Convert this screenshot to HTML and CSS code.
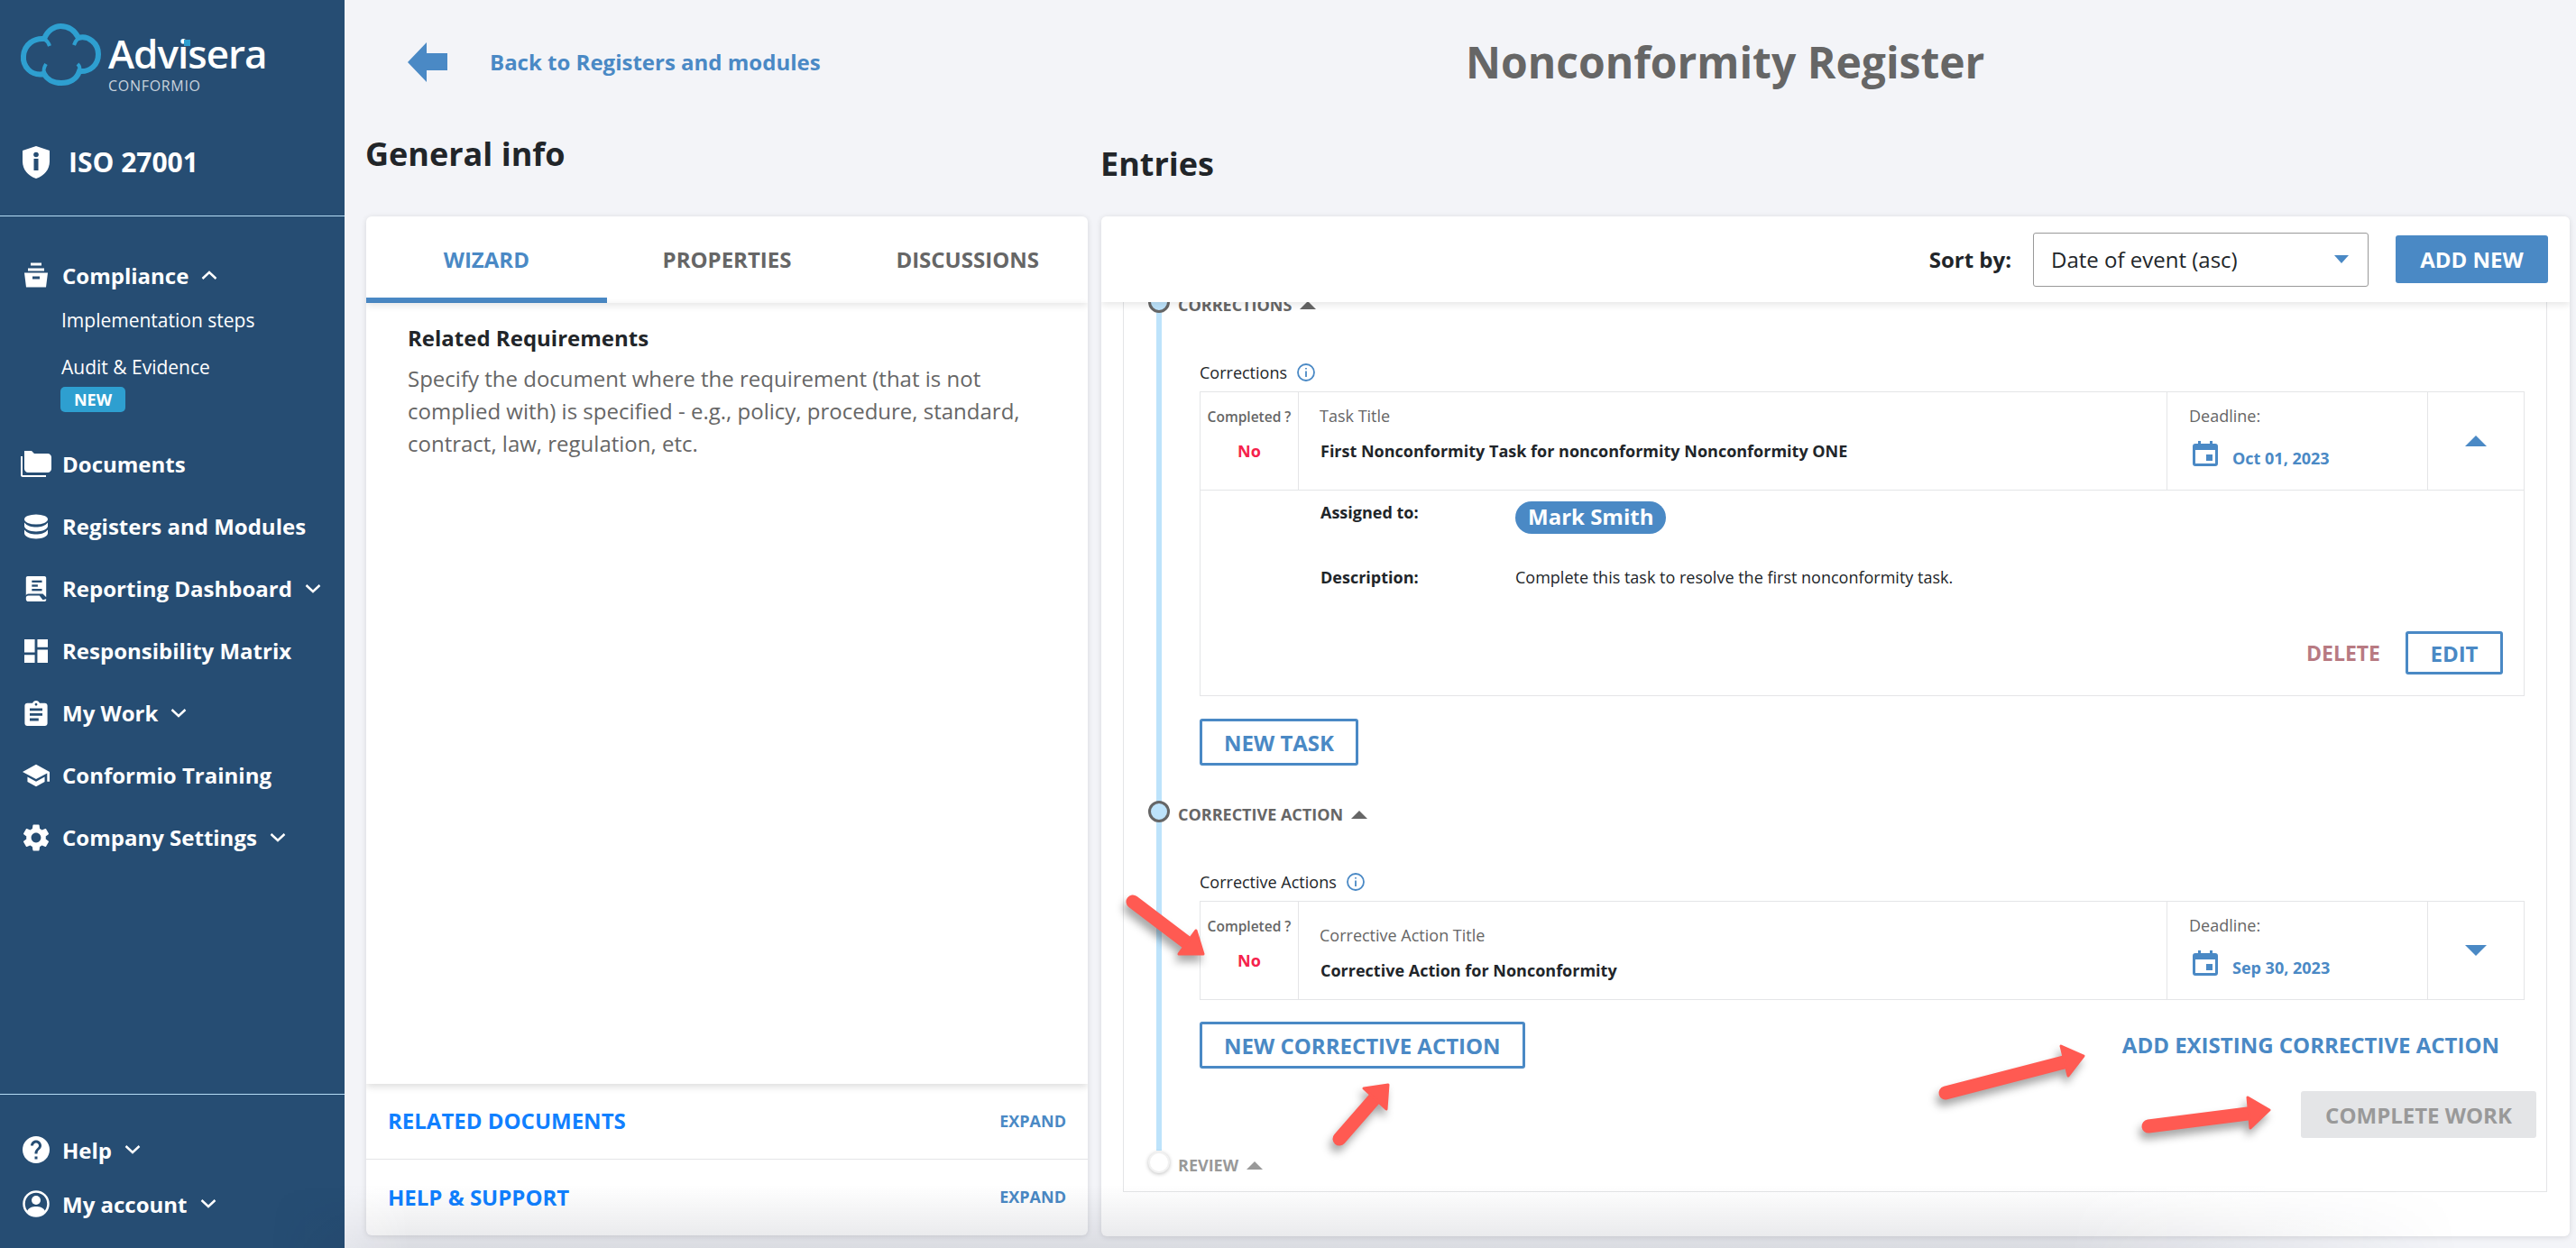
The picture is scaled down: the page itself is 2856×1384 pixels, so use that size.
FILE: index.html
```html
<!DOCTYPE html>
<html lang="en">

<head>
    <meta charset="UTF-8">
    <meta name="viewport" content="width=device-width, initial-scale=1.0">
    <title>Nonconformity Register</title>
    <link rel="stylesheet" href="styles.css">
</head>

<body>

    <!-- Sidebar -->
    <aside class="sidebar">
        <div class="brand">
            <div class="logo">
                <svg class="logo-cloud" viewBox="0 0 90 69">
                    <path d="M27 56C12 59 3 47 4 36C5 23 16 16 27 17C31 7 39 3 45 3C54 3 61 8 65 16C76 13 87 22 87 34C87 46 78 54 66 53C63 62 55 66 46 66C37 66 30 62 27 56Z"/>
                    <path class="logo-curl" d="M27 17C30 19 32 22 33 25M65 16C63 18 61 21 60 24M27 56C26 52 27 48 29 45M66 53C67 50 66 47 64 45"/>
                </svg>
                <div class="logo-text">
                    <span class="logo-name">Advisera<i class="logo-dot"></i></span>
                    <span class="logo-sub">CONFORMIO</span>
                </div>
            </div>
            <div class="iso">
                <svg class="iso-icon" viewBox="0 0 30 36"><path d="M15 0L30 5V17C30 26 24 33 15 36C6 33 0 26 0 17V5Z"/><rect class="cut" x="12.5" y="14" width="5" height="13"/><circle class="cut" cx="15" cy="9.5" r="2.8"/></svg>
                <span>ISO 27001</span>
            </div>
        </div>

        <nav class="nav">
            <div class="nav-row nav-row-open">
                <span class="nav-icon"><svg viewBox="0 0 26 27"><rect x="7" y="0" width="12" height="3"/><rect x="4" y="6" width="18" height="3"/><path d="M0 11H26L24 27H2ZM9 15V18H17V15Z" fill-rule="evenodd"/></svg></span>
                <span>Compliance</span>
                <svg class="chev" viewBox="0 0 18 10"><polyline points="1.5,9 9,2 16.5,9"/></svg>
            </div>
            <a class="sub-link">Implementation steps</a>
            <a class="sub-link sub-link-audit">Audit &amp; Evidence</a>
            <span class="badge-new">NEW</span>

            <div class="nav-row">
                <span class="nav-icon nav-icon-folder"><svg viewBox="0 0 34 29"><path d="M4 0H12L15 3H30C32 3 34 5 34 7V20C34 22 32 24 30 24H8C6 24 4 22 4 20Z"/><path d="M0 6H2V26C2 27 2 27 3 27H28V29H2C1 29 0 28 0 27Z"/></svg></span>
                <span>Documents</span>
            </div>
            <div class="nav-row">
                <span class="nav-icon"><svg viewBox="0 0 26 27"><ellipse cx="13" cy="5.5" rx="13" ry="5.5"/><path d="M0 9C3 13 8 14 13 14C18 14 23 13 26 9V13C26 16 20 19 13 19C6 19 0 16 0 13Z"/><path d="M0 17C3 21 8 22 13 22C18 22 23 21 26 17V21C26 24 20 27 13 27C6 27 0 24 0 21Z"/></svg></span>
                <span>Registers and Modules</span>
            </div>
            <div class="nav-row">
                <span class="nav-icon"><svg viewBox="0 0 24 30"><path d="M2 0H22C23 0 24 1 24 2V25L20 21H3C1 21 0 22 0 24V2C0 1 1 0 2 0Z"/><path d="M3 23H16L20 28L24 27V28C24 29 23 30 22 30H3C1 30 0 29 0 27V26C0 24 1 23 3 23Z"/><rect class="cut" x="7" y="5" width="12" height="2.5"/><rect class="cut" x="7" y="10" width="7" height="2.5"/><rect class="cut" x="7" y="15" width="12" height="2.5"/></svg></span>
                <span>Reporting Dashboard</span>
                <svg class="chev chev-down" viewBox="0 0 18 10"><polyline points="1.5,1 9,8 16.5,1"/></svg>
            </div>
            <div class="nav-row">
                <span class="nav-icon"><svg viewBox="3 3 18 18"><path d="M3 13h8V3H3v10zm0 8h8v-6H3v6zm10 0h8V11h-8v10zm0-18v6h8V3h-8z"/></svg></span>
                <span>Responsibility Matrix</span>
            </div>
            <div class="nav-row">
                <span class="nav-icon"><svg viewBox="3 1 18 20"><path d="M19 3h-4.18C14.4 1.84 13.3 1 12 1c-1.3 0-2.4.84-2.82 2H5c-1.1 0-2 .9-2 2v14c0 1.1.9 2 2 2h14c1.1 0 2-.9 2-2V5c0-1.1-.9-2-2-2zm-7 0c.55 0 1 .45 1 1s-.45 1-1 1-1-.45-1-1 .45-1 1-1zm2 14H7v-2h7v2zm3-4H7v-2h10v2zm0-4H7V7h10v2z"/></svg></span>
                <span>My Work</span>
                <svg class="chev chev-down" viewBox="0 0 18 10"><polyline points="1.5,1 9,8 16.5,1"/></svg>
            </div>
            <div class="nav-row">
                <span class="nav-icon nav-icon-wide"><svg viewBox="1 3 22 18"><path d="M5 13.18v4L12 21l7-3.82v-4L12 17l-7-3.82zM12 3L1 9l11 6 9-4.91V17h2V9L12 3z"/></svg></span>
                <span>Conformio Training</span>
            </div>
            <div class="nav-row">
                <span class="nav-icon nav-icon-wide"><svg viewBox="2.5 2 19 20"><path d="M19.14 12.94c.04-.3.06-.61.06-.94 0-.32-.02-.64-.07-.94l2.03-1.58c.18-.14.23-.41.12-.61l-1.92-3.32c-.12-.22-.37-.29-.59-.22l-2.39.96c-.5-.38-1.03-.7-1.62-.94l-.36-2.54c-.04-.24-.24-.41-.48-.41h-3.84c-.24 0-.43.17-.47.41l-.36 2.54c-.59.24-1.13.57-1.62.94l-2.39-.96c-.22-.08-.47 0-.59.22L2.74 8.87c-.12.21-.08.47.12.61l2.03 1.58c-.05.3-.09.63-.09.94s.02.64.07.94l-2.03 1.58c-.18.14-.23.41-.12.61l1.92 3.32c.12.22.37.29.59.22l2.39-.96c.5.38 1.03.7 1.62.94l.36 2.54c.05.24.24.41.48.41h3.84c.24 0 .44-.17.47-.41l.36-2.54c.59-.24 1.13-.56 1.62-.94l2.39.96c.22.08.47 0 .59-.22l1.92-3.32c.12-.22.07-.47-.12-.61l-2.01-1.58zM12 15.6c-1.98 0-3.6-1.62-3.6-3.6s1.62-3.6 3.6-3.6 3.6 1.62 3.6 3.6-1.62 3.6-3.6 3.6z"/></svg></span>
                <span>Company Settings</span>
                <svg class="chev chev-down" viewBox="0 0 18 10"><polyline points="1.5,1 9,8 16.5,1"/></svg>
            </div>
        </nav>

        <div class="sidebar-foot">
            <div class="nav-row nav-row-foot">
                <span class="nav-icon nav-icon-wide"><svg viewBox="2 2 20 20"><path d="M12 2C6.48 2 2 6.48 2 12s4.48 10 10 10 10-4.48 10-10S17.52 2 12 2zm1 17h-2v-2h2v2zm2.07-7.75l-.9.92C13.45 12.9 13 13.5 13 15h-2v-.5c0-1.1.45-2.1 1.17-2.83l1.24-1.26c.37-.36.59-.86.59-1.41 0-1.1-.9-2-2-2s-2 .9-2 2H8c0-2.21 1.79-4 4-4s4 1.79 4 4c0 .88-.36 1.68-.93 2.25z"/></svg></span>
                <span>Help</span>
                <svg class="chev chev-down" viewBox="0 0 18 10"><polyline points="1.5,1 9,8 16.5,1"/></svg>
            </div>
            <div class="nav-row nav-row-foot">
                <span class="nav-icon nav-icon-wide"><svg viewBox="0 0 30 30"><circle class="ring" cx="15" cy="15" r="13.5"/><circle cx="15" cy="11" r="5"/><path d="M5 23C7 19 11 18 15 18C19 18 23 19 25 23C22 27 19 28 15 28C11 28 8 27 5 23Z"/></svg></span>
                <span>My account</span>
                <svg class="chev chev-down" viewBox="0 0 18 10"><polyline points="1.5,1 9,8 16.5,1"/></svg>
            </div>
        </div>
    </aside>

    <!-- Main area -->
    <main class="main">
        <header class="topbar">
            <a class="back">
                <svg class="back-arrow" viewBox="0 0 44 44"><path d="M0 22L21 0V12H44V31H21V44Z"/></svg>
                <span>Back to Registers and modules</span>
            </a>
            <h1 class="page-title">Nonconformity Register</h1>
        </header>

        <div class="columns">

            <!-- General info -->
            <section class="col col-left">
                <h2 class="col-title">General info</h2>
                <div class="panel panel-left">
                    <div class="tabs">
                        <div class="tab tab-active">WIZARD</div>
                        <div class="tab">PROPERTIES</div>
                        <div class="tab">DISCUSSIONS</div>
                    </div>
                    <div class="wizard-body">
                        <h3>Related Requirements</h3>
                        <p>Specify the document where the requirement (that is not complied with) is specified - e.g., policy, procedure, standard, contract, law, regulation, etc.</p>
                    </div>
                    <div class="accordion">
                        <span>RELATED DOCUMENTS</span>
                        <span class="expand">EXPAND</span>
                    </div>
                    <div class="accordion">
                        <span>HELP &amp; SUPPORT</span>
                        <span class="expand">EXPAND</span>
                    </div>
                </div>
            </section>

            <!-- Entries -->
            <section class="col col-right">
                <h2 class="col-title col-title-entries">Entries</h2>
                <div class="panel panel-right">
                    <div class="entries-head">
                        <span class="sort-label">Sort by:</span>
                        <div class="select">
                            <span>Date of event (asc)</span>
                            <i class="select-caret"></i>
                        </div>
                        <button class="btn-add" type="button">ADD NEW</button>
                    </div>

                    <div class="entry-box">
                        <div class="step step-first">
                            <i class="dot"></i>
                            <span class="step-label">CORRECTIONS</span>
                            <i class="step-caret"></i>
                        </div>
                        <div class="step-body">
                            <div class="field-label">Corrections
                                <svg class="info" viewBox="0 0 20 20"><circle cx="10" cy="10" r="9"/><line x1="10" y1="8.5" x2="10" y2="15"/><line x1="10" y1="5" x2="10" y2="6.5"/></svg>
                            </div>
                            <div class="task">
                                <div class="task-row">
                                    <div class="cell cell-done">
                                        <div class="done-q">Completed ?</div>
                                        <div class="done-a">No</div>
                                    </div>
                                    <div class="cell cell-title">
                                        <div class="muted">Task Title</div>
                                        <div class="strong">First Nonconformity Task for nonconformity Nonconformity ONE</div>
                                    </div>
                                    <div class="cell cell-date">
                                        <div class="muted">Deadline:</div>
                                        <div class="date">
                                            <svg class="cal" viewBox="0 0 28 28"><path d="M6 0H9V3H19V0H22V3H25C27 3 28 4 28 6V25C28 27 27 28 25 28H3C1 28 0 27 0 25V6C0 4 1 3 3 3H6ZM3 10V25H25V10Z" fill-rule="evenodd"/><rect x="15" y="15" width="7" height="7"/></svg>
                                            <span>Oct 01, 2023</span>
                                        </div>
                                    </div>
                                    <div class="cell cell-toggle"><i class="tri-up"></i></div>
                                </div>
                                <div class="task-detail">
                                    <div class="detail-row">
                                        <span class="detail-key">Assigned to:</span>
                                        <span class="chip">Mark Smith</span>
                                    </div>
                                    <div class="detail-row detail-row-desc">
                                        <span class="detail-key">Description:</span>
                                        <span>Complete this task to resolve the first nonconformity task.</span>
                                    </div>
                                    <div class="detail-actions">
                                        <span class="link-delete">DELETE</span>
                                        <button class="btn-line btn-edit" type="button">EDIT</button>
                                    </div>
                                </div>
                            </div>
                            <button class="btn-line btn-new" type="button">NEW TASK</button>
                        </div>

                        <div class="step">
                            <i class="dot"></i>
                            <span class="step-label">CORRECTIVE ACTION</span>
                            <i class="step-caret"></i>
                        </div>
                        <div class="step-body">
                            <div class="field-label">Corrective Actions
                                <svg class="info" viewBox="0 0 20 20"><circle cx="10" cy="10" r="9"/><line x1="10" y1="8.5" x2="10" y2="15"/><line x1="10" y1="5" x2="10" y2="6.5"/></svg>
                            </div>
                            <div class="task">
                                <div class="task-row">
                                    <div class="cell cell-done">
                                        <div class="done-q">Completed ?</div>
                                        <div class="done-a">No</div>
                                    </div>
                                    <div class="cell cell-title cell-title-low">
                                        <div class="muted">Corrective Action Title</div>
                                        <div class="strong">Corrective Action for Nonconformity</div>
                                    </div>
                                    <div class="cell cell-date">
                                        <div class="muted">Deadline:</div>
                                        <div class="date">
                                            <svg class="cal" viewBox="0 0 28 28"><path d="M6 0H9V3H19V0H22V3H25C27 3 28 4 28 6V25C28 27 27 28 25 28H3C1 28 0 27 0 25V6C0 4 1 3 3 3H6ZM3 10V25H25V10Z" fill-rule="evenodd"/><rect x="15" y="15" width="7" height="7"/></svg>
                                            <span>Sep 30, 2023</span>
                                        </div>
                                    </div>
                                    <div class="cell cell-toggle"><i class="tri-down"></i></div>
                                </div>
                            </div>
                            <div class="action-row">
                                <button class="btn-line btn-new" type="button">NEW CORRECTIVE ACTION</button>
                                <span class="link-add">ADD EXISTING CORRECTIVE ACTION</span>
                            </div>
                            <div class="complete-row">
                                <button class="btn-complete" type="button">COMPLETE WORK</button>
                            </div>
                        </div>

                        <div class="step step-todo">
                            <i class="dot"></i>
                            <span class="step-label">REVIEW</span>
                            <i class="step-caret"></i>
                        </div>
                    </div>
                </div>
            </section>
        </div>
    </main>

    <!-- Bottom fade of the screenshot -->
    <div class="fade"></div>

    <!-- Red annotation arrows -->
    <svg class="marks" viewBox="0 0 2856 1384">
        <line x1="1256" y1="1000" x2="1322" y2="1050"/>
        <polygon points="1334,1058 1326,1032 1307,1058"/>
        <line x1="1485" y1="1263" x2="1526" y2="1216"/>
        <polygon points="1539,1203 1512,1207 1537,1230"/>
        <line x1="2157" y1="1212" x2="2296" y2="1176"/>
        <polygon points="2310,1171 2285,1160 2293,1193"/>
        <line x1="2382" y1="1249" x2="2500" y2="1234"/>
        <polygon points="2516,1231 2492,1217 2495,1251"/>
    </svg>

</body>

</html>
```

FILE: styles.css
```css
/* General Reset */
* {
    margin: 0;
    padding: 0;
    box-sizing: border-box;
}

body {
    display: flex;
    height: 100vh;
    overflow: hidden;
    position: relative;
    background: #f3f4f8;
    color: #212529;
    font-family: 'Open Sans', sans-serif;
    font-size: 18px;
}

button {
    font-family: inherit;
}

/* Sidebar */
.sidebar {
    width: 382px;
    flex-shrink: 0;
    display: flex;
    flex-direction: column;
    background: #264d73;
    color: #fff;
}

.brand {
    height: 240px;
    padding: 26px 0 0 22px;
    border-bottom: 1px solid #b5dcf5;
}

.logo {
    display: flex;
    gap: 8px;
    height: 72px;
}

.logo-cloud {
    width: 90px;
    height: 69px;
    fill: none;
    stroke: #2e9fd0;
    stroke-width: 6;
}

.logo-curl {
    stroke-width: 4;
}

.logo-text {
    display: flex;
    flex-direction: column;
}

.logo-name {
    position: relative;
    font-size: 44px;
    font-weight: 600;
    line-height: 60px;
    letter-spacing: -1px;
    margin-top: 3px;
}

.logo-dot {
    position: absolute;
    left: 84px;
    top: 15px;
    width: 7px;
    height: 7px;
    background: #2e9fd0;
}

.logo-sub {
    font-size: 16px;
    line-height: 12px;
    letter-spacing: 0.7px;
    color: #c9d3dd;
}

.iso {
    display: flex;
    align-items: center;
    gap: 21px;
    margin: 62px 0 0 3px;
    font-size: 30px;
    font-weight: 700;
    line-height: 40px;
}

.iso-icon {
    width: 30px;
    height: 36px;
    fill: #fff;
}

.cut {
    fill: #264d73;
}

.nav {
    padding-top: 42px;
}

.nav-row {
    display: flex;
    align-items: center;
    height: 69px;
    font-size: 24px;
    font-weight: 700;
}

.nav-row-open {
    height: 46px;
}

.nav-icon {
    width: 69px;
    flex-shrink: 0;
    padding-left: 27px;
    display: flex;
    align-items: center;
}

.nav-icon svg {
    width: 26px;
    height: 28px;
    fill: #fff;
}

.nav-icon-wide {
    padding-left: 25px;
}

.nav-icon-wide svg {
    width: 30px;
    height: 30px;
}

.nav-icon-folder {
    padding-left: 23px;
}

.nav-icon-folder svg {
    width: 34px;
    height: 29px;
}

.ring {
    fill: none;
    stroke: #fff;
    stroke-width: 2.5;
}

.chev {
    width: 18px;
    height: 10px;
    margin-left: 14px;
    fill: none;
    stroke: #fff;
    stroke-width: 2.4;
}

.sub-link {
    display: block;
    margin: 12px 0 0 68px;
    font-size: 21px;
    line-height: 30px;
}

.sub-link-audit {
    margin-top: 22px;
}

.badge-new {
    display: block;
    width: 72px;
    height: 28px;
    margin: 7px 0 23px 67px;
    background: #2e9fd0;
    border-radius: 5px;
    font-size: 18px;
    font-weight: 700;
    line-height: 28px;
    text-align: center;
}

.sidebar-foot {
    margin-top: auto;
    padding: 31px 0 19px;
    border-top: 1px solid #b5dcf5;
}

.nav-row-foot {
    height: 60px;
}

/* Main area */
.main {
    flex: 1;
    min-width: 0;
}

.topbar {
    display: flex;
    align-items: center;
    height: 137px;
    padding-left: 70px;
}

.back {
    width: 1173px;
    display: flex;
    align-items: center;
    gap: 47px;
    color: #4a89c5;
    font-size: 24px;
    font-weight: 700;
}

.back-arrow {
    width: 44px;
    height: 44px;
    fill: #4a89c5;
}

.page-title {
    font-size: 48px;
    font-weight: 700;
    color: #666;
}

.columns {
    display: flex;
    gap: 15px;
    padding: 0 7px 0 24px;
}

.col-left {
    width: 800px;
}

.col-right {
    width: 1628px;
}

.col-title {
    height: 103px;
    margin-left: -1px;
    font-size: 36px;
    font-weight: 700;
    line-height: 68px;
}

.col-title-entries {
    line-height: 90px;
}

.panel {
    background: #fff;
    border-radius: 6px;
    box-shadow: 0 1px 6px rgba(0, 0, 0, 0.12);
    overflow: hidden;
    display: flex;
    flex-direction: column;
}

/* Left panel */
.panel-left {
    height: 1130px;
}

.tabs {
    display: flex;
    height: 96px;
    position: relative;
    box-shadow: 0 3px 8px rgba(0, 0, 0, 0.1);
}

.tab {
    flex: 1;
    text-align: center;
    font-size: 24px;
    font-weight: 700;
    line-height: 96px;
    color: #666;
}

.tab-active {
    color: #4a89c5;
    box-shadow: inset 0 -6px 0 #4a89c5;
}

.wizard-body {
    flex: 1;
    padding: 21px 40px 0 46px;
    box-shadow: 0 3px 8px rgba(0, 0, 0, 0.14);
    position: relative;
}

.wizard-body h3 {
    font-size: 24px;
    font-weight: 700;
    line-height: 36px;
}

.wizard-body p {
    margin-top: 9px;
    font-size: 24px;
    line-height: 36px;
    color: #666;
}

.accordion {
    display: flex;
    justify-content: space-between;
    align-items: center;
    height: 84px;
    padding: 0 24px 2px 24px;
    border-bottom: 1px solid #e4e5e7;
    color: #1080ff;
    font-size: 24px;
    font-weight: 700;
}

.accordion:last-child {
    border-bottom: none;
}

.expand {
    color: #4a89c5;
    font-size: 18px;
    font-weight: 700;
}

/* Right panel */
.panel-right {
    height: 1131px;
}

.entries-head {
    display: flex;
    justify-content: flex-end;
    align-items: center;
    flex-shrink: 0;
    height: 95px;
    padding-right: 24px;
    position: relative;
    z-index: 2;
    background: #fff;
    box-shadow: 0 3px 8px rgba(0, 0, 0, 0.1);
}

.sort-label {
    font-size: 24px;
    font-weight: 700;
    margin-right: 24px;
}

.select {
    display: flex;
    justify-content: space-between;
    align-items: center;
    width: 372px;
    height: 60px;
    padding: 0 21px 0 19px;
    margin-right: 30px;
    border: 1px solid #999;
    border-radius: 3px;
    font-size: 24px;
}

.select-caret {
    border-top: 9px solid #4a89c5;
    border-left: 8px solid transparent;
    border-right: 8px solid transparent;
}

.btn-add {
    width: 169px;
    height: 53px;
    border: none;
    border-radius: 3px;
    background: #4a89c5;
    color: #fff;
    font-size: 24px;
    font-weight: 700;
}

.entry-box {
    height: 987px;
    margin: 0 25px 0 24px;
    padding: 0 24px 0 27px;
    position: relative;
    overflow: hidden;
    border: 1px solid #e4e5e7;
    border-top: none;
}

/* Timeline line */
.entry-box::before {
    content: "";
    position: absolute;
    left: 36px;
    top: 0;
    bottom: 45px;
    width: 6px;
    background: #bde3fb;
}

.step {
    display: flex;
    align-items: center;
    height: 24px;
    margin-top: 39px;
    color: #666;
    position: relative;
}

.step-first {
    margin-top: -12px;
}

.dot {
    width: 24px;
    height: 24px;
    flex-shrink: 0;
    margin-right: 9px;
    border-radius: 50%;
    border: 3px solid #666;
    background: #bde3fb;
}

.step-label {
    padding-top: 6px;
    font-size: 18px;
    font-weight: 700;
    line-height: 24px;
}

.step-caret {
    margin: 6px 0 0 9px;
    border-bottom: 9px solid currentColor;
    border-left: 9px solid transparent;
    border-right: 9px solid transparent;
}

.step-todo {
    margin-top: 15px;
    color: #999;
}

.step-todo .dot {
    border: 2px solid #f1f1f1;
    background: #fff;
    box-shadow: 0 1px 4px rgba(0, 0, 0, 0.25);
}

.step-body {
    padding-left: 57px;
}

.field-label {
    display: flex;
    align-items: center;
    gap: 11px;
    margin-top: 54px;
    font-size: 18px;
    line-height: 24px;
}

.info {
    width: 20px;
    height: 20px;
    fill: none;
    stroke: #4a89c5;
    stroke-width: 1.8;
}

/* Task table */
.task {
    margin-top: 9px;
    border: 1px solid #e4e5e7;
}

.task-row {
    display: grid;
    grid-template-columns: 108px 963px 289px 1fr;
    height: 108px;
}

.cell {
    border-left: 1px solid #e4e5e7;
}

.cell:first-child {
    border-left: none;
}

.cell-done {
    padding-top: 15px;
    text-align: center;
}

.done-q {
    font-size: 15.5px;
    font-weight: 600;
    line-height: 24px;
    color: #666;
    white-space: nowrap;
}

.done-a {
    margin-top: 14px;
    font-weight: 700;
    line-height: 24px;
    color: #f5224b;
}

.cell-title {
    padding: 14px 0 0 23px;
}

.cell-title-low {
    padding-top: 25px;
}

.muted {
    line-height: 24px;
    color: #666;
}

.strong {
    margin: 15px 0 0 1px;
    font-weight: 700;
    line-height: 24px;
}

.cell-date {
    padding: 14px 0 0 24px;
}

.date {
    display: flex;
    gap: 16px;
    margin: 16px 0 0 4px;
    color: #4a89c5;
    font-weight: 700;
}

.date span {
    margin-top: 7px;
    line-height: 24px;
}

.cal {
    width: 28px;
    height: 28px;
    fill: #4a89c5;
}

.cell-toggle {
    display: flex;
    justify-content: center;
    align-items: center;
}

.tri-up {
    border-bottom: 12px solid #4a89c5;
    border-left: 12px solid transparent;
    border-right: 12px solid transparent;
}

.tri-down {
    border-top: 12px solid #4a89c5;
    border-left: 12px solid transparent;
    border-right: 12px solid transparent;
}

.task-detail {
    display: flex;
    flex-direction: column;
    height: 228px;
    padding: 12px 23px 23px 133px;
    border-top: 1px solid #e4e5e7;
}

.detail-row {
    display: flex;
    line-height: 24px;
}

.detail-row-desc {
    margin-top: 36px;
}

.detail-key {
    width: 216px;
    font-weight: 700;
}

.chip {
    height: 36px;
    padding: 0 14px;
    border-radius: 18px;
    background: #4a89c5;
    color: #fff;
    font-size: 24px;
    font-weight: 700;
    line-height: 34px;
}

.detail-actions {
    display: flex;
    justify-content: flex-end;
    align-items: center;
    gap: 28px;
    margin-top: auto;
}

.link-delete {
    color: #b87a82;
    font-size: 23px;
    font-weight: 700;
}

/* Buttons */
.btn-line {
    border: 3px solid #4a89c5;
    border-radius: 3px;
    background: #fff;
    color: #4a89c5;
    font-size: 24px;
    font-weight: 700;
}

.btn-new {
    display: block;
    height: 52px;
    margin-top: 25px;
    padding: 0 24px;
}

.btn-edit {
    width: 108px;
    height: 48px;
}

.action-row {
    display: flex;
    justify-content: space-between;
    align-items: flex-end;
    padding-right: 28px;
}

.action-row .btn-new {
    margin-top: 24px;
}

.link-add {
    color: #4a89c5;
    font-size: 24px;
    font-weight: 700;
    line-height: 52px;
}

.complete-row {
    display: flex;
    justify-content: flex-end;
    margin: 25px -13px 0 0;
}

.btn-complete {
    width: 261px;
    height: 52px;
    border: none;
    border-radius: 3px;
    background: #e4e5e7;
    color: #999;
    font-size: 24px;
    font-weight: 700;
}

/* Overlays */
.fade {
    position: absolute;
    left: 300px;
    right: 0;
    bottom: 0;
    height: 70px;
    background: linear-gradient(to bottom, rgba(20, 25, 50, 0), rgba(20, 25, 50, 0.11));
    -webkit-mask-image: linear-gradient(to right, transparent 0, #000 6%, #000 78%, transparent 95%);
    mask-image: linear-gradient(to right, transparent 0, #000 6%, #000 78%, transparent 95%);
    z-index: 3;
}

.marks {
    position: absolute;
    left: 0;
    top: 0;
    width: 2856px;
    height: 1384px;
    z-index: 4;
    filter: drop-shadow(-3px 7px 5px rgba(0, 0, 0, 0.35));
}

.marks line {
    stroke: #ff5a52;
    stroke-width: 15;
    stroke-linecap: round;
}

.marks polygon {
    fill: #ff5a52;
    stroke: #ff5a52;
    stroke-width: 3;
    stroke-linejoin: round;
}
```
